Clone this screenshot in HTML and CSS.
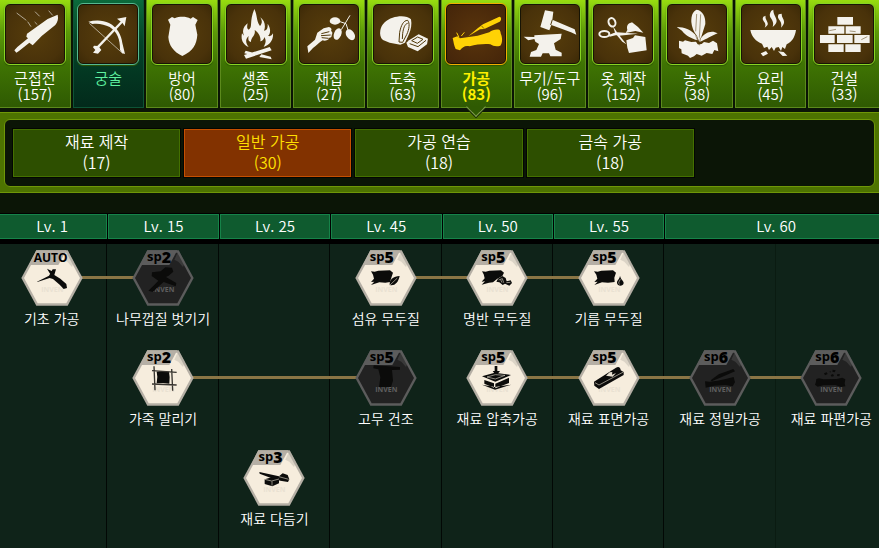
FILE: index.html
```html
<!DOCTYPE html>
<html lang="ko">
<head>
  <meta charset="UTF-8" />
  <meta name="viewport" content="width=device-width, initial-scale=1" />
  <title>스킬 트리 - 가공</title>
  <link rel="stylesheet" href="styles.css">
</head>
<body>

  <!-- 육각형 배경 -->
  <svg class="defs" aria-hidden="true">
    <symbol id="hex" viewBox="0 0 186 168">
      <polygon class="hex-edge" points="1,84 46,1 140,1 185,84 140,167 46,167" />
      <polygon class="hex-face" points="9,84 50,8 136,8 177,84 136,160 50,160" />
      <polygon class="hex-tab" points="46,1 136,1 112,45 24,45" />
      <path class="hex-edge" d="M140 1l19 36-6 14-14-16-12-6z" opacity=".4" />
      <text class="hex-mark" x="94" y="125" text-anchor="middle">INVEN</text>
    </symbol>
  </svg>

  <nav class="tabs">
    <button class="tab" type="button">
      <span class="icon"><svg viewBox="12 12 180 180"><path d="M78 101L140 57l30-13c3 12 0 22-7 31l-41 33-27 28-10-8-31 25-8 5-6-7 9-10 32-26-5-5z"/><path class="thin" d="M47 39l29 22M102 35l14 14M143 32l12 14M80 65l10 15M101 66l8 8" opacity=".6"/></svg></span>
      <span class="name">근접전</span><span class="count">(157)</span>
    </button>
    <button class="tab archery" type="button">
      <span class="icon"><svg viewBox="232 12 180 180"><path d="M263 65c22-6 45-5 62 4 26 14 37 36 40 60l8 33-8-2-7-10c1-32-9-55-31-69-16-8-34-12-52-9z"/><path class="line" d="M288 145l78-82"/><path d="M349 56l28-5-5 28-7-11z"/><path d="M280 137l13 1 9 12-10 11-15-3 7-8-7-8z"/><path class="thin" d="M266 70l100 90" opacity=".6"/></svg></span>
      <span class="name">궁술</span>
    </button>
    <button class="tab" type="button">
      <span class="icon"><svg viewBox="457 12 180 180"><path d="M505 59l12-8 8 4c15-6 34-6 48 1l7-5 14 9-7 14 6 30c-2 30-13 48-45 64-27-13-40-31-42-57l6-37z"/></svg></span>
      <span class="name">방어</span><span class="count">(80)</span>
    </button>
    <button class="tab" type="button">
      <span class="icon"><svg viewBox="15 12 180 180"><path d="M100 27c10 21 5 35 17 51 8-10 6-17 1-26 13 10 17 26 11 40 13-1 11-16 11-21 9 12 10 30 1 37 9 2 12-3 15-8 2 20-9 34-28 41 7-12 8-21 2-30-2 10-8 12-12 13 3-14-7-28-17-34 4 18-12 22-11 36-9-3-9-10-7-18-11 10-9 22 0 33-18-7-24-23-20-41l6 7c-8-19 2-29 11-37-2 9-3 16 3 19 13-8 1-23 17-62z"/><path d="M69 165l77-24 6 10-77 25zM74 152l28 8-11 5-21-5zM121 163l28 7 3 8-37-7z"/></svg></span>
      <span class="name">생존</span><span class="count">(25)</span>
    </button>
    <button class="tab" type="button">
      <span class="icon"><svg viewBox="236 12 180 180"><path d="M261 139l23-20 7-21 19-13 16-4c8 3 9 8 6 12 5 2 5 8 2 12 1 5-2 8-7 8-3 10-16 10-20 8-11 7-18 16-29 23l-14 15z"/><ellipse cx="344" cy="63" rx="16" ry="11"/><ellipse cx="352" cy="102" rx="11" ry="18" transform="rotate(22 352 102)"/><ellipse cx="390" cy="104" rx="12" ry="18" transform="rotate(-33 390 104)"/><path class="thin stem" d="M389 46l-12 20-14 23M359 65l18 6 6 19"/><path class="cut" d="M303 101l24-6M302 107l29-2M304 113l21 2"/></svg></span>
      <span class="name">채집</span><span class="count">(27)</span>
    </button>
    <button class="tab" type="button">
      <span class="icon"><svg viewBox="456 12 180 180"><path d="M478 91c3-19 18-32 37-38 20-7 45-6 55 5 3 15 0 31-6 44l-12 26-14 6-32-6-20-8c-8-6-10-17-8-29z"/><path class="cut" d="M560 61c-13 0-20 16-24 36l-2 29 11 1 12-23c8-17 10-35 3-43zM560 70c-9 2-13 15-15 31l-1 16"/><path d="M564 121l29-18 28 13-3 17-28 21-29-13-5-13z"/><path class="cut" d="M566 131l25 9 24-19M572 122l18-11 16 7-17 12z"/></svg></span>
      <span class="name">도축</span><span class="count">(63)</span>
    </button>
    <button class="tab active" type="button">
      <span class="icon"><svg viewBox="14 12 180 180"><path d="M34 114l14-5 8 6 53-8 35-10c9-8 23-10 31-7 4 6 2 10 5 15 3 10 4 23-3 32-12 4-22 1-30-4-21-2-42 1-62 6-13-4-21 2-29 12l-13-4c-5-9-6-20-9-33z"/><path d="M72 116l37-31 16-12 49-23c8 1 6 12 1 15l-46 22-13 1-34 20z"/><path class="thin" d="M53 112l-7-14M60 108l9-11"/><path class="cut" d="M104 103l25-16M121 78l7 8" opacity=".7"/></svg></span>
      <span class="name">가공</span><span class="count">(83)</span>
    </button>
    <button class="tab" type="button">
      <span class="icon"><svg viewBox="236 12 180 180"><path d="M311 31l25 4-3 24 67 29 5 16-16-7-59-22-6 16-27-10z"/><path class="cut" d="M333 59l-5 16"/><path d="M247 110l32 1v-5l82-5-3 16-20 13 5 19 18 9v11h-34l-4-9h-19l-5 10h-34l4-14 16-6 8-18-11-7-3-8-18 4z"/></svg></span>
      <span class="name">무기/도구</span><span class="count">(96)</span>
    </button>
    <button class="tab" type="button">
      <span class="icon"><svg viewBox="458 12 180 180"><ellipse class="ring" cx="515" cy="67" rx="10" ry="13" transform="rotate(-22 515 67)"/><ellipse class="ring" cx="492" cy="102" rx="15" ry="9"/><path d="M518 79l12 18 63 4-57 6-10-3zM505 105l21-8 8 5 24 31-12-8-17-20-21 5z"/><path d="M561 90c-4-17 6-20 14-23l18 14 16 17-24-5-29 6z"/><path d="M558 121l20-7 6-8 31 5 4 40-53 8-5-16z"/></svg></span>
      <span class="name">옷 제작</span><span class="count">(152)</span>
    </button>
    <button class="tab" type="button">
      <span class="icon"><svg viewBox="24 12 180 180"><path d="M113 29c19 3 27 22 26 43l-12 38-6 16-7-18c-10-12-16-28-17-42 0-20 4-32 16-37z"/><path d="M53 81c24 0 45 8 61 29l2 11c-18-5-37-15-47-29zM176 100c-19-11-39-2-52 17l-2 9c23-10 35-18 54-26z"/><path d="M60 122l12 3 6-4 19 5 14-1 5 8 12-1 7-6 15 3 12-7 12 8 4 24-12-4-6 12-17-3-15 8-15-5-8 7-12 5-6-7-19-7-1-12-7-4z"/><path class="cut" d="M113 42l-3 52M125 43l-4 70M110 106l10 29M124 113l-2 23" opacity=".5"/></svg></span>
      <span class="name">농사</span><span class="count">(38)</span>
    </button>
    <button class="tab" type="button">
      <span class="icon"><svg viewBox="243 12 180 180"><path d="M271 90h137c-3 21-12 36-28 43l-5 14-8-6-4 12-7-12-9 2-5 10-7-12-8 9-5-10-10 4-6-13c-18-6-31-21-35-41z"/><path d="M310 50c-8 15 13 15 4 33 22-13-2-21 3-36zM334 32c-15 24 12 22 4 49 26-21 1-29 2-52zM356 43c-9 17 13 16 7 40 20-21 1-24 2-42z"/><path d="M302 160l16-7 6 8-15 8zM354 154l17 2 11 11-14 1z"/></svg></span>
      <span class="name">요리</span><span class="count">(45)</span>
    </button>
    <button class="tab" type="button">
      <span class="icon"><svg viewBox="465 12 180 180"><path d="M535 51h47v23h-47zM508 79h48v22h-48zM560 79h45v22h-45zM483 105h44v24h-44zM534 105h47v24h-47zM586 105h46v24h-46zM508 133h46v23h-46zM559 133h46v23h-46z"/><path class="cut" d="M511 92l20-4M607 119l18-9M572 93l18 2" opacity=".5"/></svg></span>
      <span class="name">건설</span><span class="count">(33)</span>
    </button>
  </nav>

  <section class="panel">
    <div class="panel-inner">
      <button class="sub" type="button">재료 제작<br>(17)</button>
      <button class="sub selected" type="button">일반 가공<br>(30)</button>
      <button class="sub" type="button">가공 연습<br>(18)</button>
      <button class="sub" type="button">금속 가공<br>(18)</button>
    </div>
  </section>

  <main>
    <div class="levels">
      <div>Lv. 1</div>
      <div>Lv. 15</div>
      <div>Lv. 25</div>
      <div>Lv. 45</div>
      <div>Lv. 50</div>
      <div>Lv. 55</div>
      <div class="wide">Lv. 60</div>
    </div>

    <div class="tree">
      <!-- 레벨 구분선 -->
      <i class="col c1"></i><i class="col c2"></i><i class="col c3"></i><i class="col c4"></i>
      <i class="col c5"></i><i class="col c6"></i><i class="col c7 faint"></i>

      <!-- 연결선 -->
      <i class="link r1 from1"></i>
      <i class="link r1 from4"></i>
      <i class="link r2 from2"></i>
      <i class="link r2 from5"></i>

      <a href="#" class="skill r1 c1">
        <span class="badge auto">AUTO</span>
        <svg viewBox="0 0 186 168"><use href="#hex"/><path d="M48 95l36-18 11-19h10l-5 17 18 11 18 16 2 12-10 3-12-13-20-17-10-3-37 12zM78 56l14 7 6 10-9 1z"/></svg>
        <span>기초 가공</span>
      </a>
      <a href="#" class="skill locked r1 c2">
        <span class="badge">sp<b>2</b></span>
        <svg viewBox="0 0 186 168"><use href="#hex"/><path d="M60 67l26-3 14-12 20 1 4 12-14 12-8 4 31 18-2 10-36-13-18 16-14 14-14-4 17-16 13-14-20-14z"/></svg>
        <span>나무껍질 벗기기</span>
      </a>
      <a href="#" class="skill r1 c4">
        <span class="badge">sp<b>5</b></span>
        <svg viewBox="0 0 186 168"><use href="#hex"/><path d="M48 64l11 1 11-3 35-1 9 7-5 15-4 13-14 2-18-1-25 8 10-10-10 1 9-10-3-12z"/><path d="M134 78c-18 0-32 11-30 27 14 4 26-7 30-27z"/><path class="etch" d="M104 106l23-22"/></svg>
        <span>섬유 무두질</span>
      </a>
      <a href="#" class="skill r1 c5">
        <span class="badge">sp<b>5</b></span>
        <svg viewBox="0 0 186 168"><use href="#hex"/><path d="M48 64l11 1 11-3 35-1 9 7-5 10-16 9-12 10-12 1-22 6 10-10-10 1 9-10-3-12z"/><path d="M96 86l13-8 10 6 3 10 12-3 4 8-8 8-13-6-7 4-10-8-9-2z"/><path class="etch" d="M98 90l11-4 4 12M121 98l12-1M108 98l-4-9"/></svg>
        <span>명반 무두질</span>
      </a>
      <a href="#" class="skill r1 c6">
        <span class="badge">sp<b>5</b></span>
        <svg viewBox="0 0 186 168"><use href="#hex"/><path d="M48 64l11 1 11-3 35-1 9 7-5 15 1 13-20 2-18-1-23 8 10-10-10 1 9-10-3-12z"/><path d="M126 77c2 12 11 14 11 22-1 10-18 11-20 0-1-8 8-11 9-22z"/><path class="etch" d="M127 88c-5 9-7 12-2 15"/></svg>
        <span>기름 무두질</span>
      </a>

      <a href="#" class="skill r2 c2">
        <span class="badge">sp<b>2</b></span>
        <svg viewBox="0 0 186 168"><use href="#hex"/><path d="M74 65l17-2 20 2 2 16-1 20-19-2-19 1 2-20z"/><path class="rod" d="M66 49l3 72M119 57l3 65M60 62l74 5M60 102l74 3"/></svg>
        <span>가죽 말리기</span>
      </a>
      <a href="#" class="skill locked r2 c4">
        <span class="badge">sp<b>5</b></span>
        <svg viewBox="0 0 186 168"><use href="#hex"/><path d="M56 46l79 5v8l-24 1 3 32-6 19H72l4-29-6-24-15-3z"/></svg>
        <span>고무 건조</span>
      </a>
      <a href="#" class="skill r2 c5">
        <span class="badge">sp<b>5</b></span>
        <svg viewBox="0 0 186 168"><use href="#hex"/><path d="M48 79l38-11 49 7-47 20zM55 90l29 10v13L55 101zM88 101l41-18v16l-41 16zM48 104l39 15 49-15-49 7z"/><path d="M86 48h8v15h8L91 77 80 63h6z"/><path class="etch" d="M63 81l25-7 29 2-29 11z"/></svg>
        <span>재료 압축가공</span>
      </a>
      <a href="#" class="skill r2 c6">
        <span class="badge">sp<b>5</b></span>
        <svg viewBox="0 0 186 168"><use href="#hex"/><path d="M48 95l66-42c8-5 14 0 14 8l9 5v9l-74 42-14-10z"/><path class="etch" d="M51 98l12 7 73-39"/><path class="cream" d="M84 77l11-10 8-1-1 8 12-5-10 11z"/></svg>
        <span>재료 표면가공</span>
      </a>
      <a href="#" class="skill locked r2 c7">
        <span class="badge">sp<b>6</b></span>
        <svg viewBox="0 0 186 168"><use href="#hex"/><path d="M48 94l14 1 23-3 25-5 24-6 4 16-7 12-22-4-34 2-25 6z"/><path d="M65 91l24-18 44-16 5 7-41 18-29 12z"/></svg>
        <span>재료 정밀가공</span>
      </a>
      <a href="#" class="skill locked r2 c8">
        <span class="badge">sp<b>6</b></span>
        <svg viewBox="0 0 186 168"><use href="#hex"/><path d="M49 87l8-2 13 3 40-1 17-4 9 5-2 12 2 9-13 2-17-6-36 1-17 4-8-6 3-9z"/><path d="M72 70l8-3 3 5-8 4zM92 75l7-3 3 6-7 2zM98 59l9 2-3 6-7-2zM112 72l8 1-2 6-7-1zM89 63l4 2-3 3z"/></svg>
        <span>재료 파편가공</span>
      </a>

      <a href="#" class="skill r3 c3">
        <span class="badge">sp<b>3</b></span>
        <svg viewBox="0 0 186 168"><use href="#hex"/><path d="M49 66l59 13 11-9 15 5 5 13-4 8-23-4-28-8-34-13z"/><path d="M65 88l21-6 22 6v12l-20 9-23-7z"/><path class="etch" d="M65 88l21 5 22-6M87 94v13M108 80l29 8"/></svg>
        <span>재료 다듬기</span>
      </a>
    </div>
  </main>

</body>
</html>
```
FILE: styles.css
```css
* {
  box-sizing: border-box;
}

body {
  margin: 0;
  background-color: #0b1506;
  color: #fff;
  font-family: "Noto Sans CJK KR", sans-serif;
  font-size: 15px;
  font-weight: 350;
  overflow-x: hidden;
}

button {
  font: inherit;
  color: inherit;
  cursor: pointer;
}

.defs {
  display: none;
}

/* 상단 탭 */
.tabs {
  display: grid;
  grid-template-columns: repeat(12, 1fr);
  gap: 2px;
  height: 108px;
  margin: 0 -1px;
  background-color: #0a1404;
}

.tab {
  display: flex;
  flex-direction: column;
  align-items: center;
  position: relative;
  min-width: 0;
  padding: 3px 0 0;
  border: 1px solid #5c8a1c;
  border-top: 0;
  background: linear-gradient(#97dc10, #5c9a08 30%, #3f7403 60%, #2f5a02);
  line-height: 16px;
  white-space: nowrap;
}

.icon {
  width: 62px;
  height: 62px;
  margin-bottom: 5px;
  border: 1px solid #88d422;
  border-radius: 6px;
  background: radial-gradient(#573d0b, #49320a 70%, #3a2806);
  box-shadow: inset 0 0 0 1px #171404, 0 1px 1px #2d5605;
}

.icon svg {
  display: block;
  width: 100%;
  height: 100%;
  fill: #f4f2ec;
  stroke: none;
}

.icon .thin,
.icon .line,
.icon .ring {
  fill: none;
  stroke: #f4f2ec;
  stroke-width: 3;
}

.icon .line {
  stroke-width: 7;
}

.icon .ring {
  stroke-width: 6;
}

.icon .cut {
  fill: none;
  stroke: #513909;
  stroke-width: 3;
}

.tab.archery {
  border-color: #0d5436;
  background: linear-gradient(#0b6a3c, #044328 40%, #022a1b);
  color: #5ff2a0;
}

.archery .icon {
  border-color: #55b890;
}

.tab.active {
  color: #fff000;
  font-weight: bold;
}

.active .icon {
  border-color: #f0ae00;
  background: radial-gradient(#5a350c, #43240a);
}

.active .icon svg {
  fill: #ffd205;
}

.active .icon .thin {
  stroke: #ffd205;
}

.tab.active::after {
  content: "";
  position: absolute;
  left: 50%;
  bottom: -7px;
  width: 13px;
  height: 13px;
  margin-left: -7px;
  border: solid #7d9c4c;
  border-width: 0 1px 1px 0;
  background: linear-gradient(135deg, transparent 50%, #2f5a02 50%);
  box-shadow: 1px 1px 0 #142604;
  transform: rotate(45deg);
}

/* 하위 분류 */
.panel {
  margin-top: 4px;
  padding: 6px 4px 5px;
  border: solid #6f9708;
  border-width: 1px 0;
  background-color: #4d7300;
}

.panel-inner {
  display: grid;
  grid-template-columns: repeat(5, 1fr);
  gap: 4px;
  padding: 9px 9px 9px 8px;
  border: 1px solid #6f9708;
  border-radius: 6px;
  background-color: #0b1506;
}

.sub {
  height: 48px;
  padding: 0 0 2px;
  border: 1px solid #447000;
  outline: 1px solid #030602;
  background-color: #2d4f00;
  font-size: 16px;
  line-height: 21px;
}

.sub.selected {
  border-color: #c45000;
  background-color: #823200;
  color: #ffe000;
}

/* 스킬 트리 */
main {
  margin: 20px -8px 0 -4px;
}

.levels,
.tree {
  display: grid;
  grid-template-columns: repeat(8, 1fr);
}

.levels {
  padding: 1px 0 5px;
  background-color: #000;
}

.levels div {
  height: 25px;
  margin-left: 1px;
  border: 1px solid #168349;
  background-color: #0f5b2f;
  line-height: 21px;
  text-align: center;
}

.levels .wide {
  grid-column: 7 / 9;
}

.tree {
  grid-template-rows: repeat(3, 100px);
  min-height: 305px;
  padding-top: 6px;
  background-color: #0f2319;
}

.col {
  grid-row: 1 / 4;
  margin-top: -6px;
  border-right: 1px solid #020805;
}

.col.faint {
  border-color: #0a1b11;
}

.link {
  height: 3px;
  margin: 26px 56px 0;
  background-color: #8a7545;
}

.skill {
  --edge: #b5afa5;
  --face: #f6eddd;
  --mark: #e9e1d2;
  display: flex;
  flex-direction: column;
  align-items: center;
  position: relative;
  color: #fff;
  font-size: 14px;
  line-height: 24px;
  text-decoration: none;
  white-space: nowrap;
}

.skill.locked {
  --edge: #5c5c5c;
  --face: #222;
  --mark: #5e5e5e;
}

.skill svg {
  width: 62px;
  height: 56px;
  fill: #0b0b0a;
}

.badge {
  position: absolute;
  top: 0;
  left: 50%;
  margin-left: -16px;
  color: #000;
  font: bold 13px/12px "Open Sans", sans-serif;
}

.badge b {
  font-size: 16px;
  vertical-align: -2px;
}

.badge.auto {
  margin-left: -18px;
  font-size: 12px;
  line-height: 15px;
}

.hex-edge,
.hex-tab {
  fill: var(--edge);
}

.hex-face {
  fill: var(--face);
}

.hex-mark {
  fill: var(--mark);
  font: bold 21px "Open Sans", sans-serif;
}

.etch {
  fill: none;
  stroke: #cfc8ba;
  stroke-width: 2;
}

.cream {
  fill: #e9e1d2;
}

.rod {
  fill: none;
  stroke: #37342f;
  stroke-width: 4;
}

/* 트리 위치 */
.r1 { grid-row: 1; }
.r2 { grid-row: 2; }
.r3 { grid-row: 3; }

.c1 { grid-column: 1; }
.c2 { grid-column: 2; }
.c3 { grid-column: 3; }
.c4 { grid-column: 4; }
.c5 { grid-column: 5; }
.c6 { grid-column: 6; }
.c7 { grid-column: 7; }
.c8 { grid-column: 8; }

.from1 { grid-column: 1 / 3; }
.from2 { grid-column: 2 / 5; }
.from4 { grid-column: 4 / 7; }
.from5 { grid-column: 5 / 9; }
```
